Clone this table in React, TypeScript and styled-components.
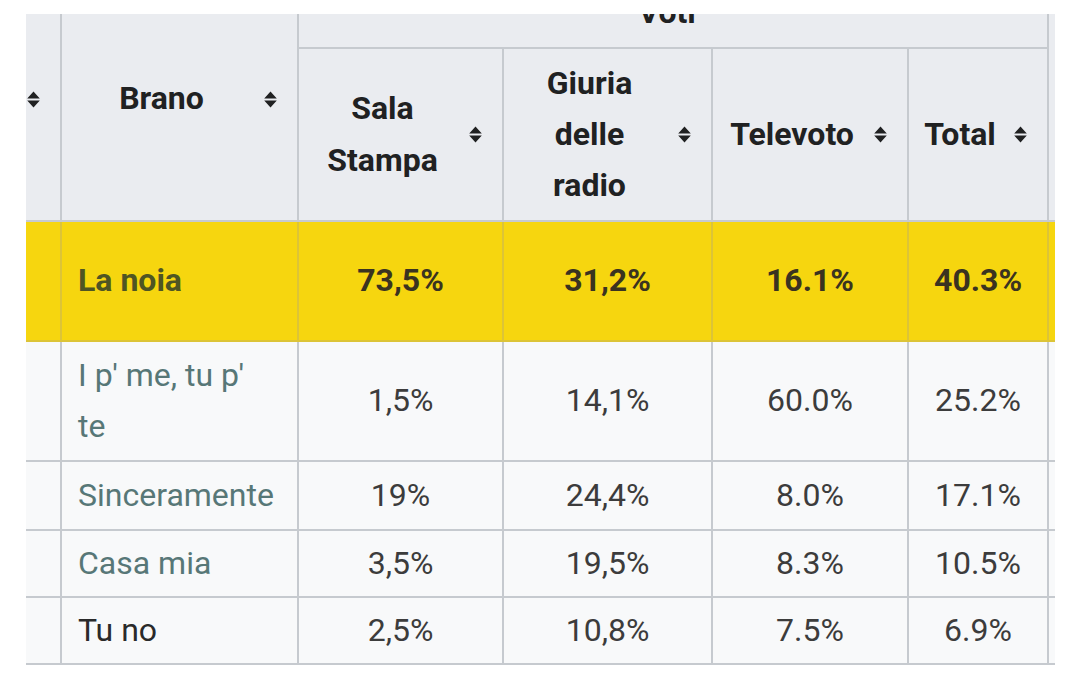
import React from "react";
import styled, { createGlobalStyle } from "styled-components";

const GlobalStyle = createGlobalStyle`
  html, body {
    margin: 0;
    padding: 0;
    background: #ffffff;
  }
  body {
    font-family: Roboto, "Noto Sans", "Liberation Sans", sans-serif;
  }
`;

const Screen = styled.main`
  width: 1080px;
  height: 688px;
  box-sizing: border-box;
  padding: 14px 0 0 26px;
  background: #ffffff;
  overflow: hidden;
`;

const Viewport = styled.div`
  width: 1029px;
  overflow: hidden;
`;

const Table = styled.table`
  border-collapse: collapse;
  table-layout: fixed;
  width: 1167px;
  margin: -38px 0 0 -46px;
  font-size: 32px;
  line-height: 1.6;
  color: #333333;
`;

const HeadRow = styled.tr<{ $h: number }>`
  height: ${(p) => p.$h}px;
`;

const HeadCell = styled.th`
  background: #eaecf0;
  border: 2px solid #c6cacf;
  padding: 8px 20px 8px 8px;
  font-weight: 700;
  color: #202122;
  vertical-align: middle;
  text-align: center;
  overflow: hidden;
`;

const SortHead = styled.div<{ $iconOnly?: boolean }>`
  display: flex;
  align-items: center;
  justify-content: ${(p) => (p.$iconOnly ? "flex-end" : "center")};
  gap: 11px;
`;

const HeadLabel = styled.span`
  flex: 1;
  text-align: center;
`;

const Icon = styled.svg`
  flex: none;
  display: block;
`;

const Row = styled.tr<{ $h: number; $winner?: boolean }>`
  height: ${(p) => p.$h}px;
  background: ${(p) => (p.$winner ? "#f6d60f" : "#f8f9fa")};
  font-weight: ${(p) => (p.$winner ? 700 : 400)};
`;

const Cell = styled.td<{ $winner?: boolean }>`
  border: 2px solid #c6cacf;
  border-color: ${(p) => (p.$winner ? "#dcc437" : "#c6cacf")};
  padding: 6px 16px;
  text-align: center;
  vertical-align: middle;
  color: ${(p) => (p.$winner ? "#3a3320" : "#3c3c3c")};
`;

const NameCell = styled(Cell)<{ $tone: "link" | "plain" | "winner" }>`
  text-align: left;
  padding-right: 20px;
  color: ${(p) =>
    p.$tone === "winner" ? "#4f5523" : p.$tone === "link" ? "#577777" : "#2a2a2a"};
`;

const SortIcon = () => (
  <Icon viewBox="0 0 13 17" width="13" height="17" aria-hidden>
    <path d="M6.5 0.5 L12.8 7.4 H0.2 Z M0.2 9.6 H12.8 L6.5 16.5 Z" fill="#202122" />
  </Icon>
);

type Entry = {
  name: string;
  tone: "link" | "plain" | "winner";
  values: string[];
  h: number;
  winner?: boolean;
};

const rows: Entry[] = [
  { name: "La noia", tone: "winner", values: ["73,5%", "31,2%", "16.1%", "40.3%"], h: 120, winner: true },
  { name: "I p' me, tu p' te", tone: "link", values: ["1,5%", "14,1%", "60.0%", "25.2%"], h: 120 },
  { name: "Sinceramente", tone: "link", values: ["19%", "24,4%", "8.0%", "17.1%"], h: 69 },
  { name: "Casa mia", tone: "link", values: ["3,5%", "19,5%", "8.3%", "10.5%"], h: 67 },
  { name: "Tu no", tone: "plain", values: ["2,5%", "10,8%", "7.5%", "6.9%"], h: 67 },
];

const voteColumns = [["Sala", "Stampa"], ["Giuria", "delle", "radio"], ["Televoto"], ["Total"]];

const colWidths = [80, 237, 205, 209, 196, 140, 100];

export default function App() {
  return (
    <>
      <GlobalStyle />
      <Screen>
        <Viewport>
          <Table>
            <colgroup>
              {colWidths.map((w, i) => (
                <col key={i} style={{ width: w }} />
              ))}
            </colgroup>
            <thead>
              <HeadRow $h={71}>
                <HeadCell rowSpan={2}>
                  <SortHead $iconOnly>
                    <SortIcon />
                  </SortHead>
                </HeadCell>
                <HeadCell rowSpan={2}>
                  <SortHead>
                    <HeadLabel>Brano</HeadLabel>
                    <SortIcon />
                  </SortHead>
                </HeadCell>
                <HeadCell colSpan={4}>Voti</HeadCell>
                <HeadCell rowSpan={2} />
              </HeadRow>
              <HeadRow $h={173}>
                {voteColumns.map((lines) => (
                  <HeadCell key={lines.join(" ")}>
                    <SortHead>
                      <HeadLabel>
                        {lines.map((l, i) => (
                          <React.Fragment key={l}>
                            {i > 0 && <br />}
                            {l}
                          </React.Fragment>
                        ))}
                      </HeadLabel>
                      <SortIcon />
                    </SortHead>
                  </HeadCell>
                ))}
              </HeadRow>
            </thead>
            <tbody>
              {rows.map((r) => (
                <Row key={r.name} $h={r.h} $winner={r.winner}>
                  <Cell $winner={r.winner} />
                  <NameCell $tone={r.tone} $winner={r.winner}>
                    {r.name}
                  </NameCell>
                  {r.values.map((v, i) => (
                    <Cell key={i} $winner={r.winner}>
                      {v}
                    </Cell>
                  ))}
                  <Cell $winner={r.winner} />
                </Row>
              ))}
            </tbody>
          </Table>
        </Viewport>
      </Screen>
    </>
  );
}
